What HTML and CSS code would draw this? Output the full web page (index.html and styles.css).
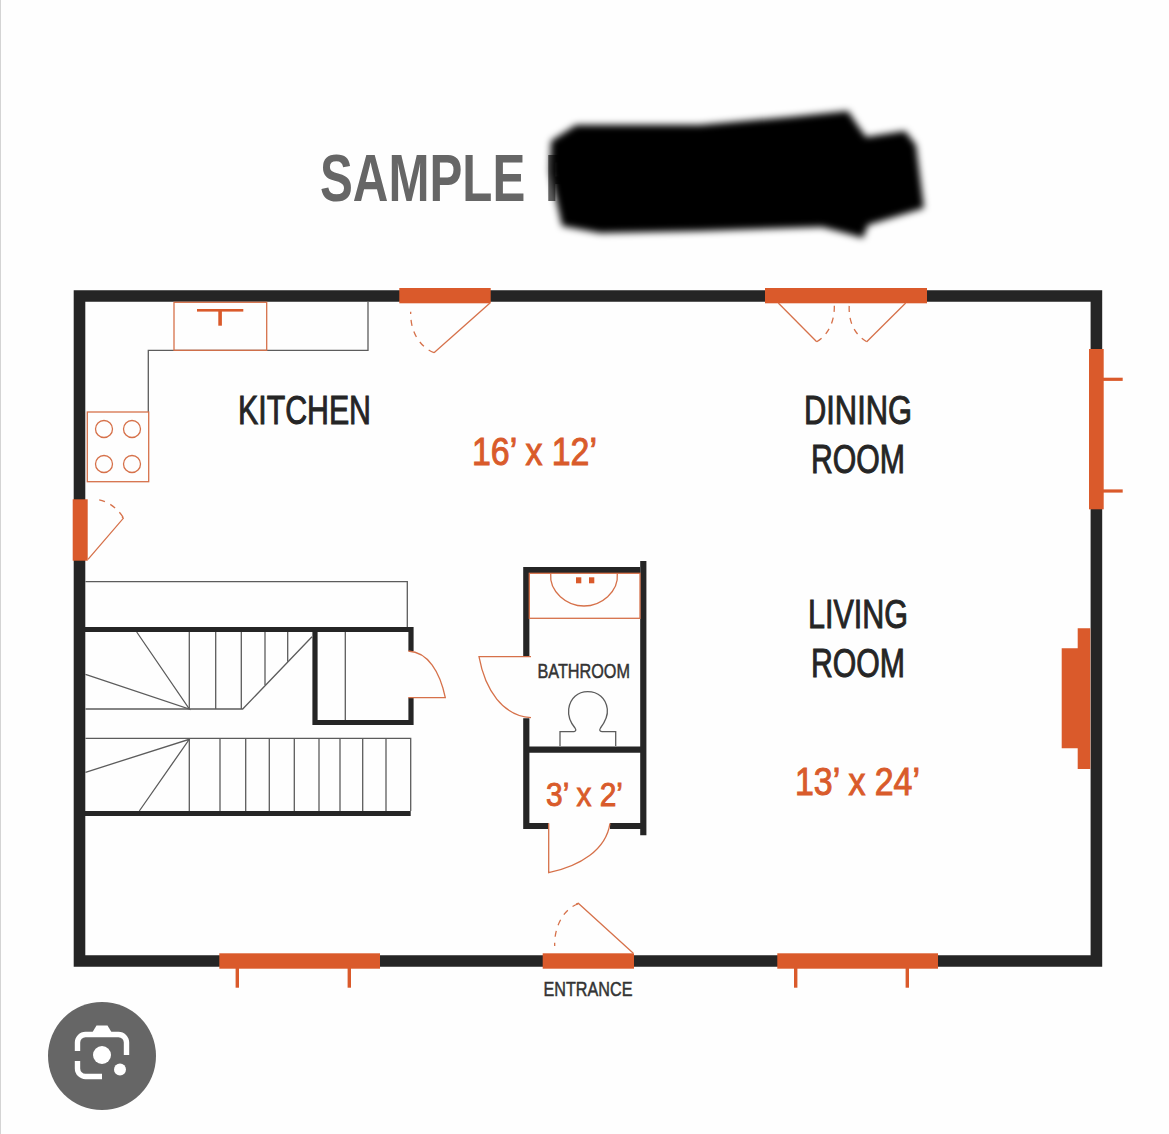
FILE: index.html
```html
<!DOCTYPE html>
<html lang="en">
<head>
<meta charset="utf-8">
<title>Sample floor plan</title>
<link rel="stylesheet" href="styles.css">
</head>
<body>
<main class="page">
<svg class="plan" viewBox="0 0 1169 1134" width="1169" height="1134" xmlns="http://www.w3.org/2000/svg">
  <defs>
    <filter id="smudge" x="-10%" y="-20%" width="120%" height="140%"><feGaussianBlur stdDeviation="3.6"/></filter>
  </defs>

  <text class="title" x="320" y="201" textLength="255" lengthAdjust="spacingAndGlyphs">SAMPLE F</text>
  <path class="redact" filter="url(#smudge)" d="M550 172 L551 141 L576 125 L700 125 L790 117 L848 111 L858 126 L866 137 L905 131 L916 145 L924 208 L868 225 L863 238 L845 233 L822 227 L700 231 L600 233 L562 226 Z"/>

  <g class="thin">
    <path d="M368 302V350.3H148.3V412"/>
    <path d="M85.5 581.7H407.3V627"/>
    <path d="M345.3 632V720"/>
    <path d="M85.5 709H242.7L312 636.7"/>
    <path d="M189.3 632V709M215.7 632V709M241.3 632V709M265 632V685M287.7 632V661.7"/>
    <path d="M136.7 632L189.3 709L85.5 674.3"/>
    <path d="M85.5 738.3H410.7V811"/>
    <path d="M189.3 738.3V811M220 738.3V811M245.7 738.3V811M269.3 738.3V811M294.3 738.3V811M319 738.3V811M340 738.3V811M362.7 738.3V811M386 738.3V811"/>
    <path d="M139.3 811L189.3 739.3L85.5 772.3"/>
    <path d="M560 746V731.7H574Q577 731 575 728C570 722 568 715 568.7 709C570 698 578 691.7 587.7 691.7C598 691.7 606 698 607.3 709C608 715 605 722 600.5 728Q598.5 731 602 731.7H615.7V746"/>
  </g>

  <g class="wall">
    <path class="outer" d="M79.5 296H1096.4V961H79.5Z"/>
    <path class="inner" d="M85 629.5H413.5M411 627V651M411 697.7V725M315 627V725M312.5 722.5H413.5M85 813.5H410.7"/>
    <path class="inner bath" d="M526.3 656.7V570H640M643.3 561V835.3M526.3 718.3V829M529 749.7H641M523.3 826H548.7M610 826H641"/>
  </g>

  <g class="orange-fill">
    <rect x="399.3" y="288" width="91.4" height="15.3"/>
    <rect x="765" y="288" width="162" height="15.3"/>
    <rect x="72.7" y="499.3" width="15" height="61.4"/>
    <rect x="1089" y="349" width="14.7" height="160.3"/>
    <rect x="219.3" y="953.3" width="160.7" height="15.4"/>
    <rect x="542.7" y="953.3" width="91.3" height="15.4"/>
    <rect x="777.3" y="953.3" width="160.7" height="15.4"/>
    <path d="M1090.3 628.3H1077.7V648.3H1061.7V748.3H1077.7V769H1090.3Z"/>
    <rect x="1103" y="377.7" width="19.7" height="3.2"/>
    <rect x="1103" y="489.4" width="19.7" height="3.2"/>
    <rect x="235.6" y="968" width="3.4" height="19.7"/>
    <rect x="347.6" y="968" width="3.4" height="19.7"/>
    <rect x="794" y="968" width="3.4" height="19.7"/>
    <rect x="905.6" y="968" width="3.4" height="19.7"/>
    <rect x="197" y="309" width="46.3" height="2.6"/>
    <rect x="218.3" y="310" width="3.6" height="15.7"/>
    <rect x="576" y="577.3" width="5.3" height="6"/>
    <rect x="589" y="577.3" width="5.3" height="6"/>
  </g>

  <g class="orange-line">
    <rect x="174" y="302.3" width="92.7" height="48"/>
    <rect x="87.3" y="412" width="61.4" height="69.7"/>
    <circle cx="104" cy="429" r="8.5"/><circle cx="132" cy="429" r="8.5"/>
    <circle cx="104" cy="464" r="8.5"/><circle cx="132" cy="464" r="8.5"/>
    <path d="M490 303L434 352.7"/>
    <path d="M88 559.3L123.3 518.3L122 516.5"/>
    <path d="M778.3 303L816.7 341.7"/>
    <path d="M905.7 303L866.7 341.7"/>
    <path d="M633.3 953.3L578.3 903.3L576 904"/>
    <path d="M408.3 651C428 652 440 672 445.3 697.7H408.3"/>
    <rect x="529.3" y="573.3" width="110.7" height="45"/>
    <path d="M550.7 573.3C549 592 567 606 584 606C601 606 619 592 617.3 573.3"/>
    <path d="M531 656.7H479C485 690 503 716 531 717.7"/>
    <path d="M548.7 823.3V872.7C580 866 606 850 610 823.3"/>
  </g>

  <g class="orange-dash">
    <path d="M434 352.7C420 347 410 332 410.7 311.7"/>
    <path d="M123 517C117 508 107 500 95 499.5"/>
    <path d="M816.7 341.7C828 335 835 322 834.3 304"/>
    <path d="M866.7 341.7C855 335 848 322 849.3 304"/>
    <path d="M578 904C565 908 554 925 554.7 946"/>
  </g>

  <g class="label">
    <text class="room" x="238" y="423.5" textLength="133" lengthAdjust="spacingAndGlyphs">KITCHEN</text>
    <text class="room" x="804" y="424" textLength="108" lengthAdjust="spacingAndGlyphs">DINING</text>
    <text class="room" x="811" y="473" textLength="94" lengthAdjust="spacingAndGlyphs">ROOM</text>
    <text class="room" x="808" y="628" textLength="100" lengthAdjust="spacingAndGlyphs">LIVING</text>
    <text class="room" x="811" y="677" textLength="94" lengthAdjust="spacingAndGlyphs">ROOM</text>
    <text class="small" x="537.5" y="677.5" textLength="92.5" lengthAdjust="spacingAndGlyphs">BATHROOM</text>
    <text class="small" x="543.5" y="996" textLength="89" lengthAdjust="spacingAndGlyphs">ENTRANCE</text>
  </g>
  <g class="size">
    <text class="dim" x="472" y="464.5" textLength="125" lengthAdjust="spacingAndGlyphs">16’ x 12’</text>
    <text class="dim" x="795" y="795" textLength="125" lengthAdjust="spacingAndGlyphs">13’ x 24’</text>
    <text class="dim-small" x="546" y="806" textLength="77" lengthAdjust="spacingAndGlyphs">3’ x 2’</text>
  </g>
</svg>

<button class="lens" type="button" aria-label="Search with image">
  <svg class="lens-icon" viewBox="0 0 108 108" width="108" height="108" xmlns="http://www.w3.org/2000/svg">
    <path class="lens-stroke" d="M29.5 49V40.5A8 8 0 0 1 37.5 32.5H70.5A8 8 0 0 1 78.5 40.5V53M29.5 59V66.5A8 8 0 0 0 37.5 74.5H54"/>
    <path class="lens-fill" d="M48.5 23.5H59.5L64 31H44Z"/>
    <circle class="lens-fill" cx="54" cy="53" r="9"/>
    <circle class="lens-fill" cx="72" cy="67.5" r="6"/>
  </svg>
</button>
</main>
</body>
</html>
```
FILE: styles.css
```css
html, body {
  margin: 0;
  padding: 0;
  background: #fefefe;
}

.page {
  position: relative;
  width: 1169px;
  height: 1134px;
  overflow: hidden;
  box-sizing: border-box;
  border-left: 1px solid #d4d4d4;
}

.plan {
  display: block;
  margin-left: -1px;
}

.plan text {
  font-family: "Liberation Sans Narrow", "Liberation Sans", Arial, sans-serif;
}

.title {
  font-size: 66px;
  font-weight: 700;
  word-spacing: 8px;
  fill: #666666;
}

.redact {
  fill: #000000;
}

.thin path {
  fill: none;
  stroke: #5c5c5c;
  stroke-width: 1.3;
}

.wall path {
  fill: none;
  stroke: #252525;
}

.wall .outer {
  stroke-width: 11.6;
  stroke-linejoin: miter;
}

.wall .inner {
  stroke-width: 5.2;
}

.wall .bath {
  stroke-width: 6.2;
}

.orange-fill rect,
.orange-fill path {
  fill: #da5a2b;
  stroke: none;
}

.orange-line rect,
.orange-line circle,
.orange-line path {
  fill: none;
  stroke: #d6714a;
  stroke-width: 1.3;
}

.orange-dash path {
  fill: none;
  stroke: #d6714a;
  stroke-width: 1.3;
  stroke-dasharray: 6 6;
}

.room {
  font-size: 41px;
  fill: #252525;
  stroke: #252525;
  stroke-width: 1;
}

.small {
  font-size: 21px;
  fill: #333333;
  stroke: #333333;
  stroke-width: 0.5;
}

.dim {
  font-size: 38px;
  fill: #d95b2b;
  stroke: #d95b2b;
  stroke-width: 1;
}

.dim-small {
  font-size: 33px;
  fill: #d95b2b;
  stroke: #d95b2b;
  stroke-width: 0.9;
}

.lens {
  position: absolute;
  left: 47px;
  top: 1002px;
  width: 108px;
  height: 108px;
  padding: 0;
  border: 0;
  border-radius: 50%;
  background: #666666;
}

.lens-icon {
  display: block;
}

.lens-stroke {
  fill: none;
  stroke: #ffffff;
  stroke-width: 5.4;
}

.lens-fill {
  fill: #ffffff;
}
```
